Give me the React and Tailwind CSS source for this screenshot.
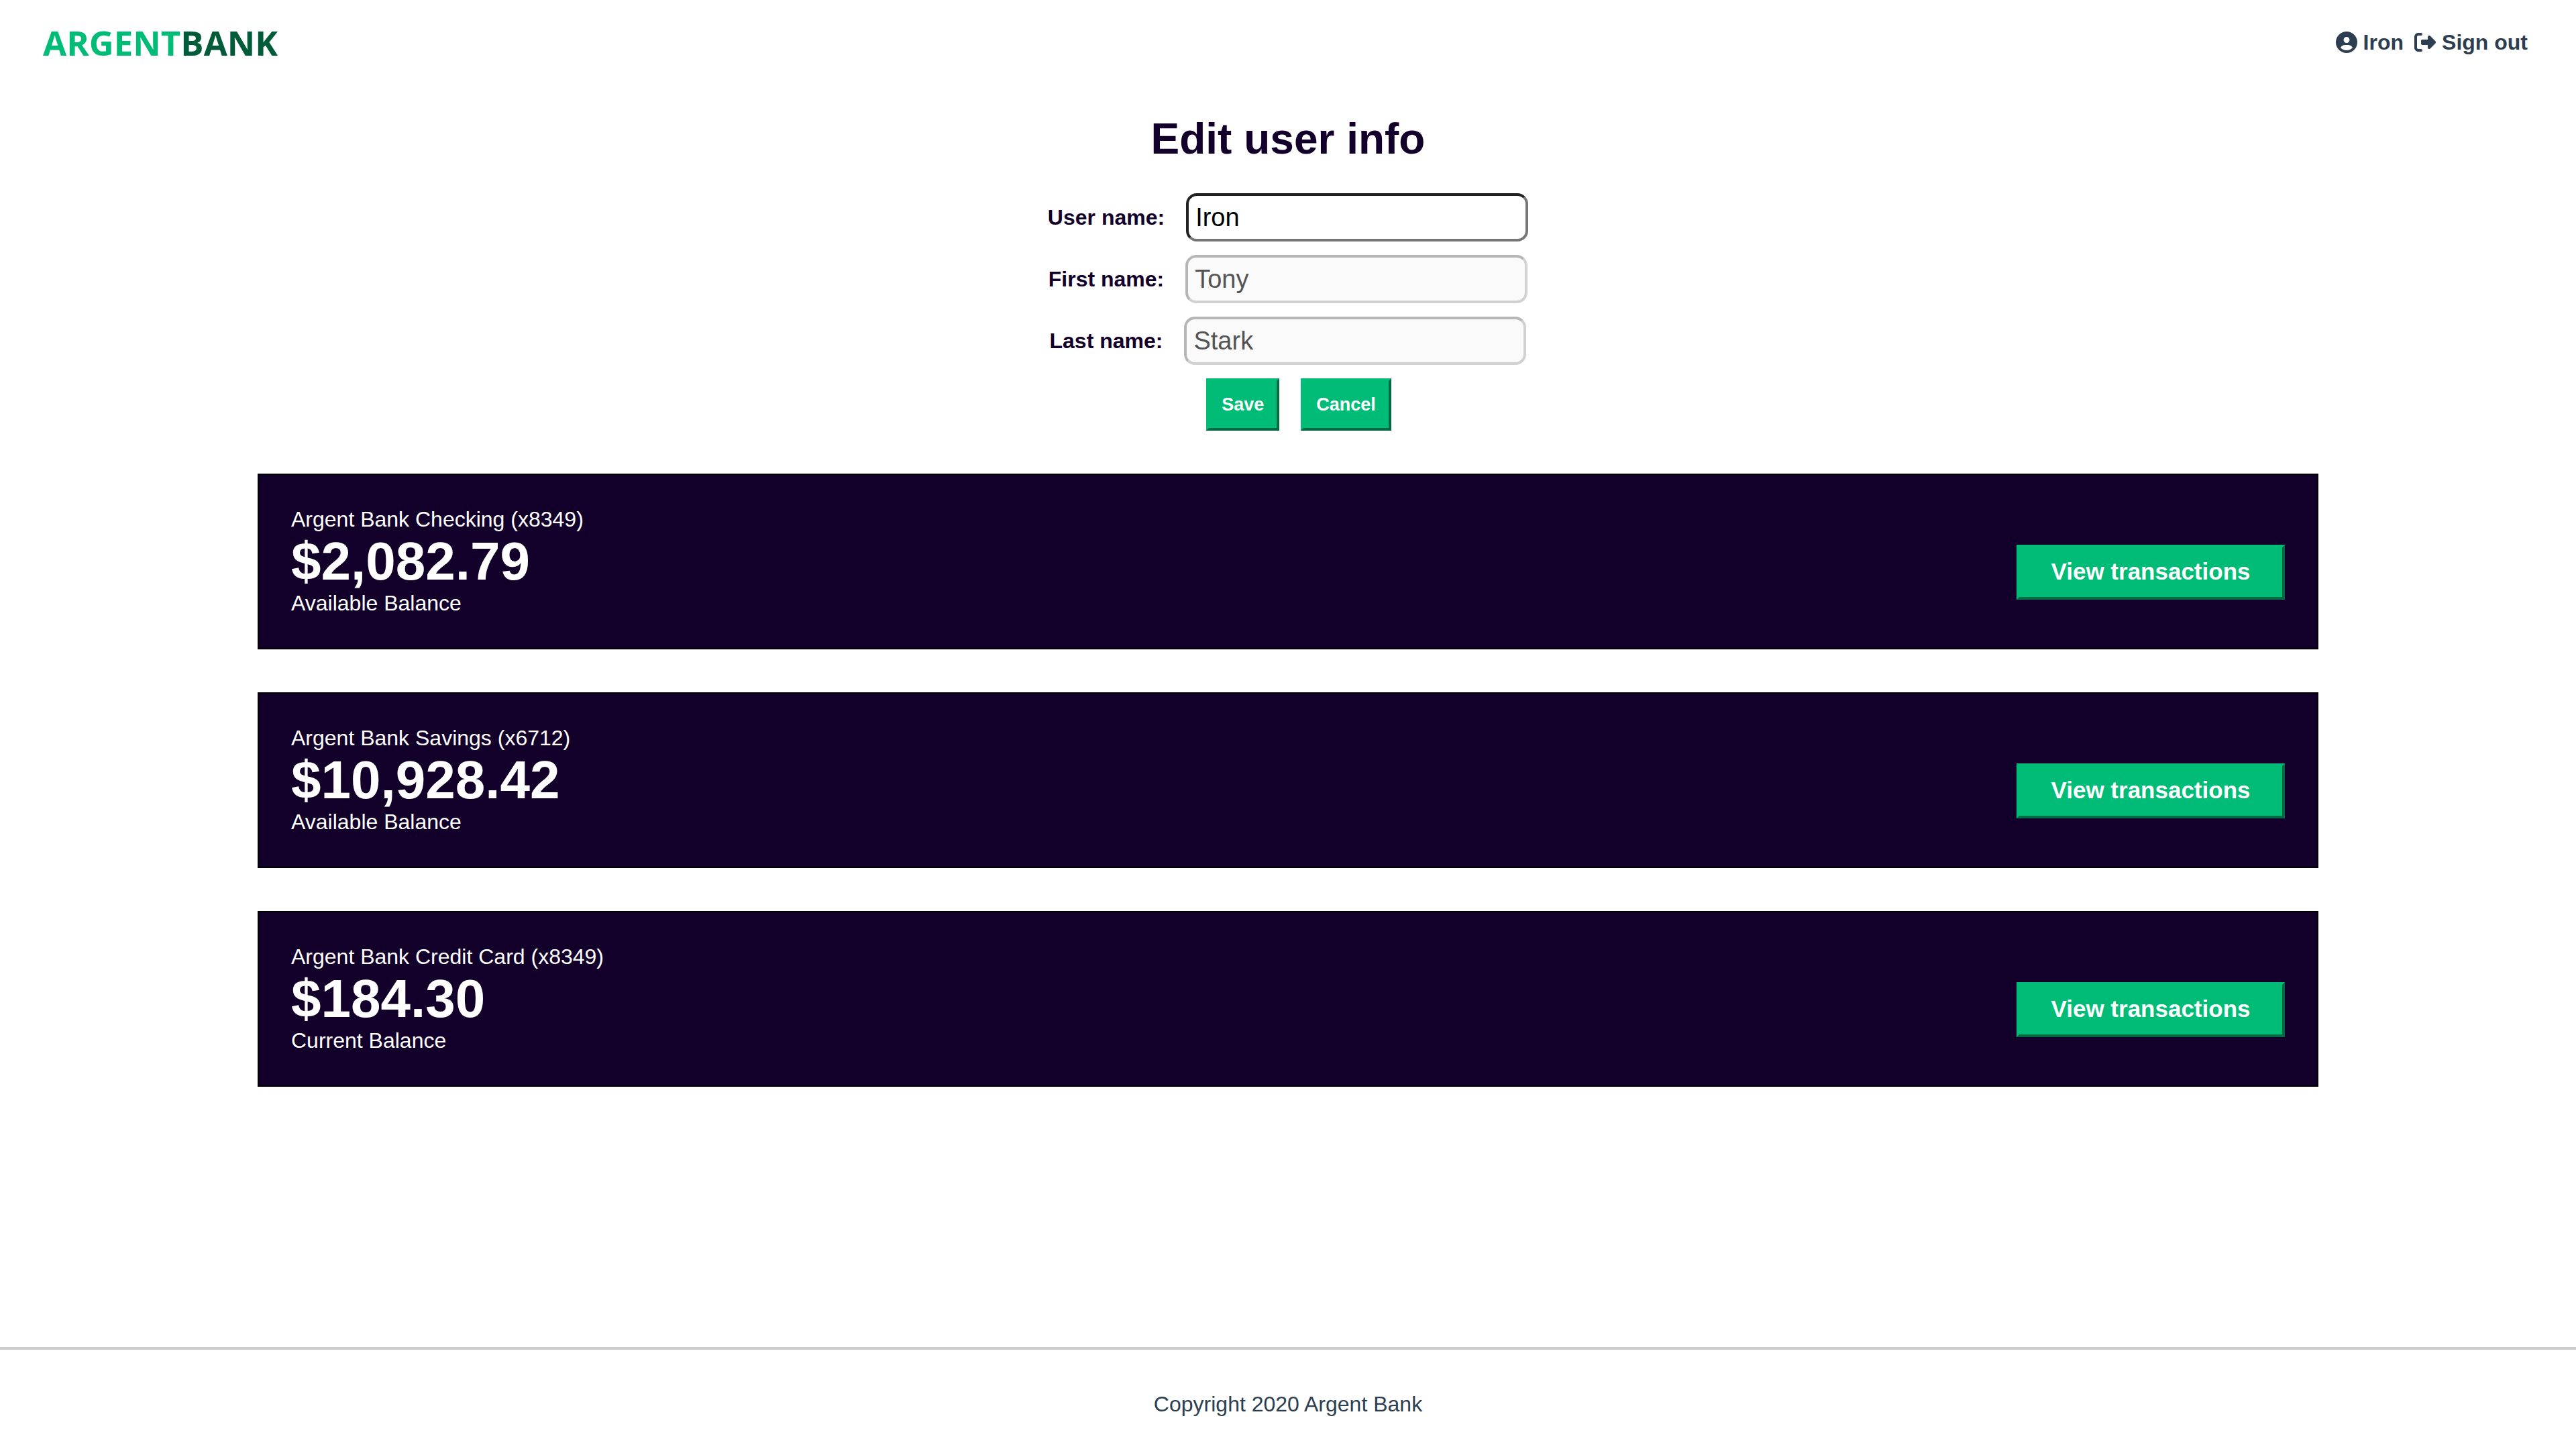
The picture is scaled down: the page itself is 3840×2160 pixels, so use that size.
import { FaCircleUser, FaRightFromBracket } from "react-icons/fa6";

const fields = [
  { id: "username", label: "User name:", value: "Iron", disabled: false },
  { id: "firstname", label: "First name:", value: "Tony", disabled: true },
  { id: "lastname", label: "Last name:", value: "Stark", disabled: true },
];

const accounts = [
  { title: "Argent Bank Checking (x8349)", amount: "$2,082.79", note: "Available Balance" },
  { title: "Argent Bank Savings (x6712)", amount: "$10,928.42", note: "Available Balance" },
  { title: "Argent Bank Credit Card (x8349)", amount: "$184.30", note: "Current Balance" },
];

const raised = "border-4 border-t-[#00bc77] border-l-[#00bc77] border-r-[#006b43] border-b-[#006b43] bg-[#00bc77] font-bold text-white";

function Header() {
  return (
    <header className="flex h-[126px] items-center justify-between pl-16 pr-[72px]">
      <a href="#home" aria-label="Argent Bank" className="flex font-['Open_Sans',sans-serif] text-[51px] leading-none font-bold text-[#00bc77]">
        ARGENT<span className="text-[#005c38]">BANK</span>
      </a>
      <nav className="flex items-center gap-4 font-bold text-[#2c3e50]">
        <a href="#profile" className="flex items-center gap-[9px]">
          <FaCircleUser className="size-8" />
          Iron
        </a>
        <a href="#signout" className="flex items-center gap-[9px]">
          <FaRightFromBracket className="size-8" />
          Sign out
        </a>
      </nav>
    </header>
  );
}

function EditForm() {
  return (
    <form className="flex flex-col items-center gap-5" onSubmit={(e) => e.preventDefault()}>
      {fields.map((f) => (
        <div key={f.id} className="flex items-center gap-8">
          <label htmlFor={f.id} className="font-bold">{f.label}</label>
          <input
            id={f.id}
            type="text"
            defaultValue={f.value}
            disabled={f.disabled}
            className="h-[72px] w-[510px] rounded-2xl border-4 border-t-[#222222] border-l-[#222222] border-r-[#767676] border-b-[#767676] bg-white px-[10px] text-[38px] text-black outline-none disabled:border-t-[#b6b6b6] disabled:border-l-[#b6b6b6] disabled:border-r-[#d1d1d1] disabled:border-b-[#d1d1d1] disabled:bg-[#fafafa] disabled:text-[#545454]"
          />
        </div>
      ))}
      <div className="flex gap-8 pl-8">
        <button type="submit" className={`${raised} h-[78px] px-[19px] text-[27px]`}>Save</button>
        <button type="button" className={`${raised} h-[78px] px-[19px] text-[27px]`}>Cancel</button>
      </div>
    </form>
  );
}

function Account({ title, amount, note }) {
  return (
    <section className="flex w-4/5 items-center justify-between border-2 border-black bg-[#12002b] p-12 text-white">
      <div>
        <h3 className="leading-[37px]">{title}</h3>
        <p className="text-[80px] leading-[88px] font-bold">{amount}</p>
        <p className="leading-[37px]">{note}</p>
      </div>
      <button type="button" className={`${raised} mt-8 h-[82px] w-[400px] pb-1 text-[35px]`}>View transactions</button>
    </section>
  );
}

export default function App() {
  return (
    <div className="flex min-h-screen flex-col bg-white font-['Liberation_Sans',Arial,sans-serif] text-[32px] leading-[37px] text-[#12002b]">
      <Header />
      <main className="flex flex-1 flex-col items-center gap-16 pt-11">
        <div className="flex flex-col items-center gap-11">
          <h1 className="text-[64px] leading-[74px] font-bold">Edit user info</h1>
          <EditForm />
        </div>
        {accounts.map((a) => (
          <Account key={a.title} {...a} />
        ))}
      </main>
      <footer className="flex justify-center border-t-4 border-[#cccccc] pt-[63px] pb-12 text-[#2c3e50]">
        <p>Copyright 2020 Argent Bank</p>
      </footer>
    </div>
  );
}
